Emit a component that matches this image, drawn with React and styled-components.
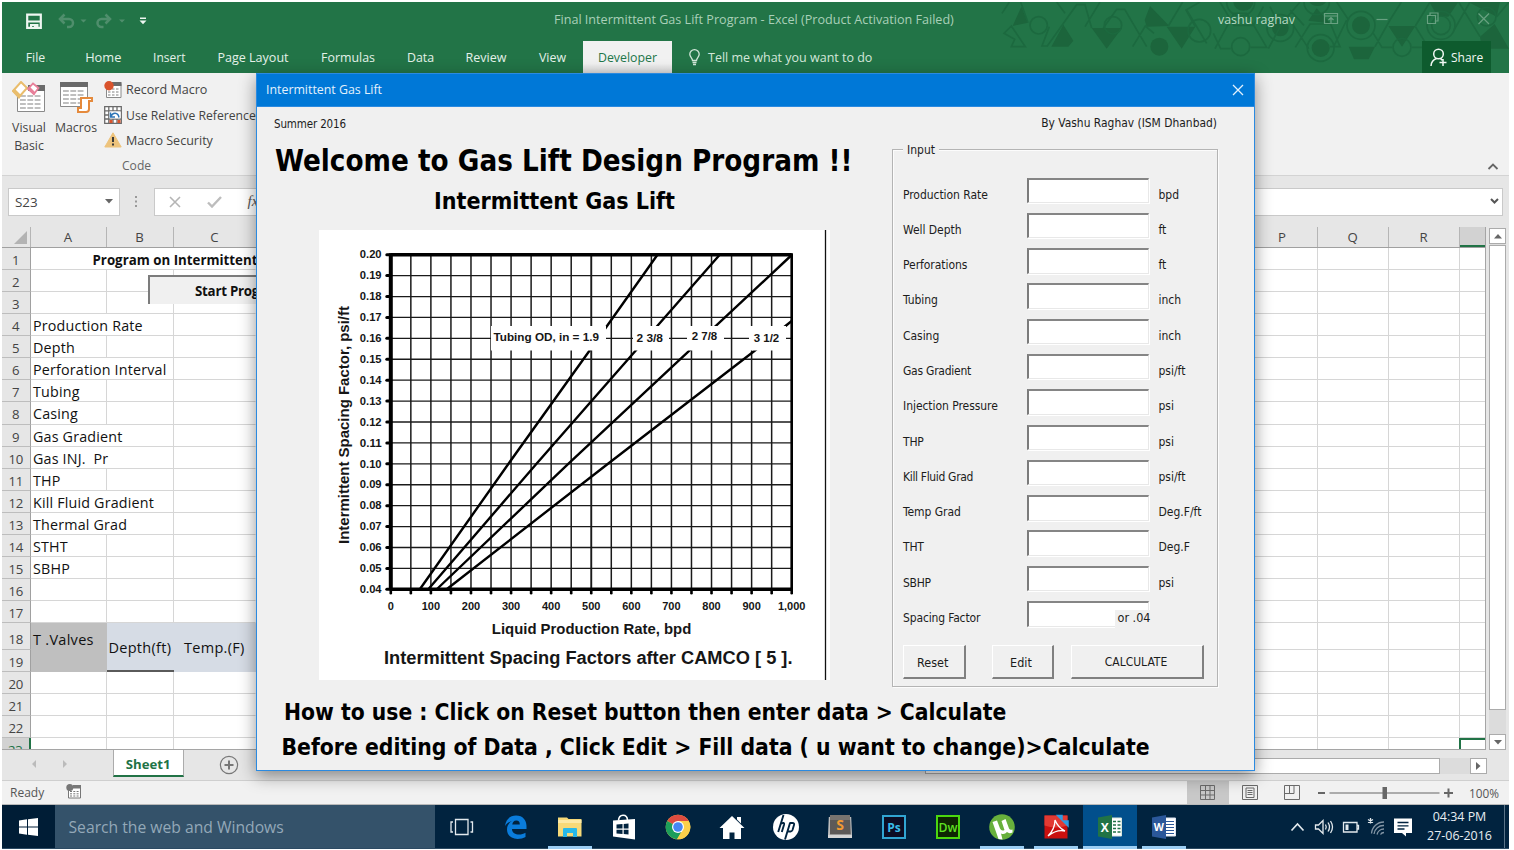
import React from 'react';
import styled, { createGlobalStyle, css } from 'styled-components';

const UI = '"Open Sans", "Noto Sans", sans-serif';
const FORM = '"DejaVu Sans Condensed", "DejaVu Sans", sans-serif';
const CHART = '"Liberation Sans", Arial, sans-serif';

const GlobalStyle = createGlobalStyle`
  * { box-sizing: border-box; }
  html, body { margin: 0; padding: 0; background: #fff; overflow: hidden; }
  svg { display: block; flex: none; }
`;

const Screen = styled.div`
  position: relative;
  width: 1507px;
  height: 847px;
  margin: 2px 0 0 2px;
  display: flex;
  flex-direction: column;
  font-family: ${UI};
  font-size: 12.5px;
  color: #444;
  white-space: nowrap;
  background: #e6e6e6;
`;

/* ---------- title bar and ribbon tabs ---------- */

const Banner = styled.header`
  position: relative;
  height: 71px;
  flex: none;
  background: #227447;
  display: flex;
  flex-direction: column;
`;

const BannerArt = styled.svg`
  position: absolute;
  right: 0;
  top: 0;
`;

const TitleBar = styled.div`
  position: relative;
  height: 39px;
  display: flex;
  align-items: center;
  padding-bottom: 4px;
  color: #a9d0b8;
`;

const QuickAccess = styled.div`
  width: 552px;
  padding: 2px 0 0 24px;
  display: flex;
  align-items: center;
`;

const WindowTitle = styled.div`
  width: 664px;
  font-size: 12.6px;
`;

const UserName = styled.div`
  width: 105px;
  font-size: 12.43px;
  color: #b9dac5;
`;

const TabBar = styled.nav`
  position: relative;
  height: 32px;
  display: flex;
`;

const RibbonTab = styled.div`
  width: ${(p) => p.$w}px;
  display: flex;
  align-items: center;
  justify-content: center;
  font-size: ${(p) => p.$size || 12.5}px;
  color: ${(p) => (p.$active ? '#22764a' : '#e4f1e9')};
  background: ${(p) => (p.$active ? 'linear-gradient(#f1f1f1 70%, #dadada)' : 'transparent')};
`;

const TellMe = styled.div`
  display: flex;
  align-items: center;
  gap: 8px;
  margin-left: 17px;
  color: #d3e7da;
`;

const Share = styled.div`
  margin: 0 18px 0 auto;
  width: 69px;
  display: flex;
  align-items: center;
  gap: 3px;
  padding-left: 8px;
  background: #0e5b2e;
  color: #f2f8f4;
  font-size: 12px;
`;

/* ---------- ribbon ---------- */

const Ribbon = styled.section`
  height: 103px;
  flex: none;
  background: #f1f1f1;
  border-bottom: 1px solid #d3d3d3;
  display: flex;
  padding: 8px 0 0 9px;
`;

const BigButton = styled.div`
  width: ${(p) => p.$w}px;
  display: flex;
  flex-direction: column;
  align-items: center;
  text-align: center;
  gap: 6px;
  font-size: 12.3px;
  line-height: 17.7px;
`;

const SmallButtons = styled.div`
  display: flex;
  flex-direction: column;
  margin: -4px 0 0 -1px;
`;

const SmallButton = styled.div`
  height: 25.4px;
  flex: none;
  display: flex;
  align-items: center;
  gap: 4px;
  font-size: ${(p) => p.$size || 12.55}px;
`;

const GroupName = styled.div`
  flex: none;
  padding-left: 18px;
  line-height: 26px;
  font-size: 12.1px;
  color: #666;
`;

const Collapse = styled.div`
  margin: 80px 10px 0 auto;
`;

/* ---------- formula bar ---------- */

const FormulaRow = styled.section`
  height: 51px;
  flex: none;
  padding: 11.5px 6px 0 6px;
  display: flex;
`;

const NameBox = styled.div`
  width: 111.5px;
  height: 28.5px;
  border: 1px solid #c9c9c9;
  background: #fff;
  display: flex;
  align-items: center;
  justify-content: space-between;
  padding: 0 6px 0 6px;
  font-size: 13.4px;
`;

const Dots = styled.div`
  width: 34px;
  display: flex;
  justify-content: center;
  align-items: center;
  height: 28.5px;
`;

const FormulaBox = styled.div`
  flex: 1;
  height: 28.5px;
  border: 1px solid #c9c9c9;
  background: #fff;
  display: flex;
  align-items: center;
  gap: 26px;
  padding: 0 3px 0 14px;
`;

const Fx = styled.i`
  font: italic 15px "Liberation Serif", serif;
  color: #555;
  flex: 1;
`;

/* ---------- worksheet ---------- */

const SheetArea = styled.section`
  height: 523px;
  flex: none;
  display: flex;
`;

const Sheet = styled.div`
  position: relative;
  width: 1484px;
  height: 523px;
  overflow: hidden;
  background: #fff;
  border-right: 1px solid #a5a5a5;
  border-bottom: 1px solid #a5a5a5;
`;

const HeadRow = styled.div`
  display: flex;
  height: 21px;
  background: #e6e6e6;
  border-bottom: 1px solid #a0a0a0;
`;

const ColHead = styled.div`
  width: ${(p) => p.$w}px;
  flex: none;
  border-right: 1px solid #b5b5b5;
  font-size: 13.2px;
  line-height: 20px;
  text-align: center;
  color: #444;
  ${(p) => p.$selected && css`
    background: #d2d2d2;
    border-bottom: 2px solid #217346;
  `}
`;

const Corner = styled(ColHead)`
  display: flex;
  align-items: flex-end;
  justify-content: flex-end;
  padding: 0 3px 3px 0;
`;

const Row = styled.div`
  display: flex;
  height: ${(p) => p.$h || 22.07}px;
`;

const RowHead = styled.div`
  width: 28.5px;
  height: ${(p) => p.$h || 22.07}px;
  flex: none;
  background: ${(p) => (p.$selected ? '#d2d2d2' : '#e6e6e6')};
  color: ${(p) => (p.$selected ? '#217346' : '#444')};
  border-right: ${(p) => (p.$selected ? '2px solid #217346' : '1px solid #a0a0a0')};
  border-bottom: 1px solid #bdbdbd;
  font-size: 13.2px;
  letter-spacing: -0.2px;
  line-height: ${(p) => (p.$h ? p.$h + 6 : 24)}px;
  text-align: center;
`;

const Cell = styled.div`
  width: ${(p) => p.$w}px;
  flex: none;
  border-right: 1px solid ${(p) => (p.$open ? 'transparent' : '#d6d6d6')};
  border-bottom: 1px solid #d6d6d6;
  padding-left: 2.5px;
  font-size: 14.3px;
  letter-spacing: 0.18px;
  line-height: 24.6px;
  color: #111;
`;

const TitleCell = styled(Cell)`
  padding-left: 62px;
  font-weight: 700;
  font-size: 13.3px;
  letter-spacing: 0;
  line-height: 24px;
`;

const MergedRows = styled.div`
  display: flex;
  height: 49px;
`;

const HeadStack = styled.div`
  display: flex;
  flex-direction: column;
  flex: none;
`;

const HeadCell = styled.div`
  width: ${(p) => p.$w}px;
  height: 49px;
  flex: none;
  background: ${(p) => p.$bg};
  border-bottom: ${(p) => (p.$line ? '2px solid #5a5a5a' : `1px solid ${p.$bg}`)};
  padding-left: ${(p) => p.$pad}px;
  color: #111;
  font-size: 14.5px;
  letter-spacing: 0.28px;
  line-height: ${(p) => p.$lh}px;
`;

const CellStack = styled.div`
  display: flex;
  flex-direction: column;
  flex: none;
`;

const StartButton = styled.div`
  position: absolute;
  left: 146px;
  top: 48px;
  width: 200px;
  height: 29px;
  background: #f0f0f0;
  border-top: 2px solid #7c7c7c;
  border-left: 2px solid #7c7c7c;
  padding-left: 45px;
  font-weight: 700;
  font-size: 13.3px;
  letter-spacing: -0.25px;
  line-height: 28px;
  color: #111;
`;

const ActiveCell = styled.div`
  width: 28px;
  height: 14px;
  margin-left: -1px;
  border-top: 2px solid #217346;
  border-left: 2px solid #217346;
`;

const VScroll = styled.div`
  margin: 1px 0 0 3px;
  width: 17px;
  display: flex;
  flex-direction: column;
  background: #dcdcdc;
`;

const ScrollButton = styled.div`
  width: 17px;
  height: 16px;
  background: #fff;
  border: 1px solid #ababab;
  display: flex;
  align-items: center;
  justify-content: center;
`;

const VThumb = styled.div`
  height: 465px;
  margin: 1px 0 auto;
  background: #fff;
  border: 1px solid #ababab;
`;

const SheetTabs = styled.section`
  height: 31px;
  flex: none;
  display: flex;
  border-bottom: 1px solid #cfcfcf;
`;

const TabArrows = styled.div`
  width: 110.5px;
  height: 28px;
  padding-left: 29px;
  display: flex;
  align-items: center;
  gap: 25px;
`;

const SheetTab = styled.div`
  width: 71.5px;
  height: 27px;
  background: #fff;
  border: solid #ababab;
  border-width: 0 1px 0 1px;
  border-bottom: 2px solid #217346;
  text-align: center;
  font-weight: 700;
  font-size: 13.2px;
  line-height: 28px;
  color: #217346;
`;

const AddSheet = styled.div`
  margin: 5px 0 0 35px;
`;

const HScroll = styled.div`
  margin: 7.5px 22.5px 0 auto;
  width: 562px;
  height: 16px;
  display: flex;
  justify-content: space-between;
  background: #dcdcdc;
`;

const HThumb = styled.div`
  width: 515px;
  background: #fff;
  border: 1px solid #ababab;
`;

/* ---------- status bar ---------- */

const StatusBar = styled.footer`
  height: 24px;
  flex: none;
  background: #f1f1f1;
  border-bottom: 1px solid #b9b9b9;
  display: flex;
  align-items: center;
  padding: 0 10px 0 8px;
  font-size: 12px;
  color: #555;
`;

const RecordIcon = styled.div`
  margin: -2px 0 0 22px;
`;

const ViewButton = styled.div`
  width: 42px;
  height: 23px;
  display: flex;
  align-items: center;
  justify-content: center;
  background: ${(p) => (p.$on ? '#c8c8c8' : 'transparent')};
`;

const Views = styled.div`
  margin-left: auto;
  display: flex;
`;

const Zoom = styled.div`
  width: 184px;
  margin-left: 2.5px;
  display: flex;
  align-items: center;
  justify-content: space-between;
  font-size: 11.8px;
`;

/* ---------- taskbar ---------- */

const Taskbar = styled.footer`
  height: 44px;
  flex: none;
  display: flex;
  background: #01233f;
  border-bottom: 1px solid #2c4a63;
`;

const StartMenu = styled.div`
  width: 53px;
  flex: none;
  display: flex;
  align-items: center;
  justify-content: center;
  background: #001d36;
`;

const SearchBox = styled.div`
  width: 380px;
  flex: none;
  padding-left: 13.5px;
  background: #34526a;
  color: #93a8b8;
  font-size: 15.7px;
  line-height: 45px;
`;

const TaskIcon = styled.div`
  width: 54px;
  flex: none;
  display: flex;
  align-items: center;
  justify-content: center;
  background: ${(p) => (p.$active ? '#014f8c' : 'transparent')};
  position: relative;
  ${(p) => (p.$open || p.$active) && css`
    &::after {
      content: '';
      position: absolute;
      left: ${p.$active ? 0 : 5}px;
      right: ${p.$active ? 0 : 5}px;
      bottom: -1px;
      height: 3px;
      background: #9bcdf3;
    }
  `}
`;

const Tray = styled.div`
  margin-left: auto;
  display: flex;
  align-items: center;
`;

const Clock = styled.div`
  width: 83px;
  margin: 0 4px 0 9px;
  border-right: 1px solid #5b7488;
  padding: 2px 7px 0 0;
  height: 43px;
  text-align: center;
  font-size: 12.45px;
  line-height: 19px;
  color: #e8eef2;
`;

/* ---------- dialog ---------- */

const Dialog = styled.div`
  position: absolute;
  left: 254px;
  top: 71px;
  width: 999px;
  height: 698px;
  background: #f0f0f0;
  border: 1px solid #2b8ae0;
  box-shadow: 0 5px 16px rgba(0, 0, 0, 0.42);
  font-family: ${FORM};
  font-size: 12px;
  color: #1c1c1c;
`;

const DialogTitle = styled.div`
  height: 33px;
  background: #0078d7;
  border-bottom: 1px solid #2b8ae0;
  display: flex;
  justify-content: space-between;
  align-items: center;
  padding: 0 10px 1px 9px;
  font-family: ${UI};
  font-size: 12.36px;
  color: #e3f1fc;
`;

const DialogBody = styled.div`
  display: flex;
`;

const Intro = styled.div`
  width: 635px;
  padding: 8.5px 0 0 17px;
`;

const Term = styled.div`
  font-size: 11.5px;
  letter-spacing: -0.15px;
  line-height: 16px;
`;

const Heading = styled.h1`
  margin: 8.5px 0 0 1px;
  font-size: 29.25px;
  line-height: 42px;
  font-weight: 700;
  color: #000;
`;

const SubHeading = styled.h2`
  margin: 0 0 0 160px;
  font-size: 23.05px;
  line-height: 38px;
  font-weight: 700;
  color: #000;
`;

const Figure = styled.div`
  margin: 10px 0 0 45px;
  width: 511px;
  height: 450px;
  background: #fff;
`;

const Help = styled.p`
  margin: ${(p) => p.$top}px 0 0 ${(p) => p.$left}px;
  font-size: ${(p) => p.$size}px;
  line-height: 35px;
  font-weight: 700;
  color: #000;
`;

const FormSide = styled.div`
  width: 326px;
  padding-top: 8px;
`;

const Author = styled.div`
  text-align: right;
  padding-right: 1px;
  font-size: 11.92px;
  line-height: 17px;
`;

const InputGroup = styled.div`
  position: relative;
  margin-top: 17px;
  height: 538px;
  border: 1px solid #b4b4b4;
  box-shadow: inset 1px 1px 0 #fcfcfc, 1px 1px 0 #fcfcfc;
  padding: 27.5px 0 0 10px;
`;

const Legend = styled.span`
  position: absolute;
  left: 10px;
  top: -8px;
  padding: 0 4px;
  line-height: 17px;
  background: #f0f0f0;
`;

const Field = styled.div`
  position: relative;
  display: flex;
  height: 35.31px;
  line-height: 34px;
`;

const FieldLabel = styled.label`
  width: 124px;
  letter-spacing: ${(p) => p.$ls || -0.05}px;
`;

const TextBox = styled.div`
  width: 122px;
  height: 25.5px;
  margin-right: 9.5px;
  background: #fff;
  border: 2px solid;
  border-color: #858585 #e8e8e8 #e8e8e8 #7b7b7b;
  border-right-width: 1px;
  border-bottom-width: 1px;
  box-shadow: 1px 1px 0 #fff;
`;

const Hint = styled.span`
  position: absolute;
  left: 212px;
  top: 9px;
  width: 39px;
  height: 18px;
  padding-left: 2.5px;
  background: #f0f0f0;
  line-height: 15px;
  font-size: 12.5px;
`;

const Buttons = styled.div`
  display: flex;
  margin-top: 9px;
`;

const Button = styled.div`
  width: ${(p) => p.$w}px;
  height: 34px;
  margin-right: ${(p) => p.$gap || 0}px;
  border: solid;
  border-width: 1px 2px 2px 1px;
  border-color: #fff #808080 #808080 #fff;
  text-align: center;
  line-height: 33px;
  padding-right: 2px;
  font-size: ${(p) => p.$size || 12.5}px;
`;

/* ---------- drawings ---------- */

const TitlePattern = () => (
  <BannerArt width="509" height="71" viewBox="0 6 1527 213">
    <g fill="#1c653c">
      <path d="M38 78 64 20 84 68z M190 74 220 122 205 140H154z M275 84H366L320 146z M450 18 508 78 440 80 434 60z M500 80H586L545 146z M925 62 950 25 990 70z M1046 140H1125L1106 178H1062z M1165 78H1246L1206 140z M1288 6H1375L1345 50 1312 48z M1405 6H1500L1490 50z M1440 110 1484 72 1527 146H1446z M700 6H760A30 26 0 0 1 700 6z M928 6H978A28 22 0 0 1 928 6z" />
      <circle cx="478" cy="140" r="27" />
      <circle cx="841" cy="84" r="25" />
      <circle cx="962" cy="144" r="27" />
      <circle cx="1083" cy="76" r="27" />
    </g>
    <g fill="none" stroke="#1c693f" strokeWidth="5">
      <path d="M6 40 28 6 M84 68 62 6 M12 100 34 78 76 140H34L44 118z M148 80 126 138H142L230 14H255L275 84 M195 40 170 6 M255 80 300 6 M310 84 350 28 H374L440 140 M398 140 436 78 462 100 M505 78 548 6 M586 80 558 30 600 6 M560 30 620 130 M645 146 702 40 740 40 800 142 H752 M640 100 662 146H692 M660 6 702 76 760 76 790 20 M805 146 846 70 900 6 M810 20 830 60 M880 76 926 146 M886 142 930 72 H992L1020 140H990 M870 30 912 76 M1000 142 1040 60 M1010 6 1046 60 M1125 140 1170 60 1204 6 M1120 100 1146 142H1176 M1246 78 1290 6 M1236 142H1270 M1246 80 1285 142 M1362 90 1410 6 M1376 6 1440 110 M1490 50 1527 6" />
      <circle cx="116" cy="76" r="26" />
      <circle cx="339" cy="76" r="26" />
      <circle cx="598" cy="92" r="34" />
      <circle cx="722" cy="140" r="27" />
      <circle cx="722" cy="6" r="42" />
      <circle cx="841" cy="84" r="40" />
      <circle cx="950" cy="6" r="38" />
      <circle cx="962" cy="144" r="40" />
      <circle cx="1083" cy="76" r="42" />
      <circle cx="1206" cy="142" r="27" />
      <circle cx="1323" cy="76" r="28" />
      <circle cx="1323" cy="76" r="42" />
      <circle cx="1460" cy="50" r="28" />
    </g>
  </BannerArt>
);

const QuickIcons = () => (
  <svg width="124" height="20" viewBox="26 10 124 20" fill="none">
    <path d="M27.200 13.600h13.600v13.200H27.200z" stroke="#eef6f1" strokeWidth="2.200" />
    <path d="M28 19.500h12v2H28z M30 23h8.500v4.500h-4.500v-2.500h-2v2.500h-2z" fill="#eef6f1" />
    <g stroke="#4f8e6c" strokeWidth="2.500">
      <path d="M64.500 13.500 60 18 64.500 22.500 M60.500 18H69a4 4 0 0 1 0 8h-2" />
      <path d="M105.500 13.500 110 18 105.500 22.500 M110 18H101.500a4 4 0 0 0 0 8h2" />
    </g>
    <path d="M80.500 18.500h6l-3 3z M119 18.500h6l-3 3z" fill="#4f8e6c" />
    <path d="M140 16.500h6v1.500h-6z M139.500 19.500h7l-3.500 3.800z" fill="#eef6f1" />
  </svg>
);

const WindowIcons = () => (
  <svg width="168" height="20" viewBox="1323 10 168 20" fill="none" stroke="#68a181" strokeWidth="1.200">
    <path d="M1324.500 13.500h13v10h-13z M1324.500 16h13 M1331 23v-5 M1328.500 20l2.500-2.500 2.500 2.500" />
    <path d="M1376.500 19.500h11" />
    <path d="M1427.500 15.500h8v8h-8z M1430 15.500v-2.500h8v8h-2.500" />
    <path d="M1478.500 13.500 1489 24 M1489 13.500 1478.500 24" />
  </svg>
);

const Bulb = () => (
  <svg width="11" height="17" viewBox="0 0 11 17" fill="none" stroke="#d3e7da" strokeWidth="1.300">
    <path d="M3.500 11.500C3.500 9 .8 8 .8 5.200a4.700 4.500 0 0 1 9.400 0C10.200 8 7.500 9 7.500 11.500z M3.500 13.500h4 M4 15.500h3" />
  </svg>
);

const Person = () => (
  <svg width="18" height="19" viewBox="0 0 18 19" fill="none" stroke="#f2f8f4" strokeWidth="1.500">
    <circle cx="8.500" cy="6" r="4.800" />
    <path d="M1 18c.3-4 2.200-6.500 5.500-7.500 M10.500 10.300l1.500 2 M9.500 14.500h7 M13 11v7" />
  </svg>
);

const TableLines = ({ x, y, w, rows, cols, s = 4, c = '#aaa' }) => (
  <g stroke={c} strokeWidth="1.300" strokeDasharray={`${w / cols - 1.5} 1.5`}>
    {Array.from({ length: rows }, (_, i) => (
      <path key={i} d={`M${x} ${y + i * s}h${w}`} />
    ))}
  </g>
);

const VisualBasicIcon = () => (
  <svg width="35" height="32" viewBox="0 0 35 32" fill="none">
    <path d="M5.500 6.500h27v24h-27z" fill="#fff" stroke="#8a8a8a" />
    <path d="M16 4h17v6H16z" fill="#6b6b6b" />
    <TableLines x={8} y={15} w={22} rows={4} cols={3} />
    <path d="M9 1 15 7 7 16 1 10z" fill="#fff" stroke="#e9bd6c" strokeWidth="2" />
    <path d="M0 10 7 18l2.500-3.500-7-7z" fill="#e9bd6c" />
    <path d="M21 2.500 26.500 7 22 13 16 8z" fill="#fff" stroke="#e8809a" strokeWidth="1.800" />
    <path d="M15.500 8l6.500 6.500 1.500-3-5.500-5.500z" fill="#e8809a" />
  </svg>
);

const MacrosIcon = () => (
  <svg width="35" height="32" viewBox="0 0 35 32" fill="none">
    <path d="M1.500 1.500h27v24h-27z" fill="#fff" stroke="#8a8a8a" />
    <path d="M1 1h28v5H1z" fill="#6b6b6b" />
    <TableLines x={4} y={10} w={22} rows={4} cols={3} />
    <path d="M22 17h11v3h-3v8c0 2-1 3-3 3h-8v-4h3z" fill="#fff" stroke="#e58a3c" strokeWidth="2" />
  </svg>
);

const RecordMacroIcon = () => (
  <svg width="18" height="17" viewBox="0 0 18 17">
    <path d="M2.500 2.500h14.500v14h-14.500z" fill="#fff" stroke="#8a8a8a" />
    <path d="M8 1h9.500v4H8z" fill="#6b6b6b" />
    <TableLines x={4} y={8} w={12} rows={3} cols={3} s={3} />
    <circle cx="5" cy="4.700" r="4.700" fill="#d9532c" />
  </svg>
);

const RelativeIcon = () => (
  <svg width="18" height="18" viewBox="0 0 18 18" fill="none">
    <path d="M.7.7h16.600v16.600H.7z M.7 4.800h16.600 M.7 13h16.600 M4.800.7v16.600 M9 .7v4 M13 .7v4 M9 13v4.500 M13 13v4.500 M.7 9h4" fill="#fff" stroke="#6b6b6b" strokeWidth="1.300" />
    <path d="M5.500 5.500h11v7h-11z" fill="#fff" />
    <path d="M7 10.500c1.500-4.500 7-4.500 8 1 M6.500 6.500v4.500h4.500" stroke="#2e75b6" strokeWidth="1.500" />
    <path d="M5.500 14h3v3h-3z M13.500 14h3v3h-3z" fill="#d9532c" />
  </svg>
);

const WarningIcon = () => (
  <svg width="18" height="16" viewBox="0 0 18 16">
    <path d="M9 .8 17.200 15H.8z" fill="#edc37c" stroke="#edc37c" strokeLinejoin="round" />
    <path d="M8 5h2v5H8z M8 11.500h2v2H8z" fill="#3a3a3a" />
  </svg>
);

const WindowsLogo = () => (
  <svg width="19" height="18" viewBox="0 0 19 18" fill="#fff">
    <path d="M0 2.500 8 1.300V8.500H0z M9 1.200 19 0v8.500H9z M0 9.500h8v7.200L0 15.500z M9 9.500h10V18L9 16.800z" />
  </svg>
);

const icon = (body, w = 26) => (
  <svg width={w} height="26" viewBox="0 0 26 26" fill="none">{body}</svg>
);

const TASKS = [
  { id: 'view', art: icon(<path d="M6.500 5.500h12.500v15H6.500z M4 8H2v10h2 M21.500 8h2v10h-2" stroke="#e3e9ed" strokeWidth="1.300" />) },
  { id: 'edge', art: icon(<path d="M2 12C3 4.500 8 1.500 13 1.500c7 0 10.500 5 10.500 10.500v3H9c0 4 3.500 5.500 7 5.500 2.500 0 4.500-.6 6.500-1.800V23c-2 1.300-5 1.900-8 1.900-6 0-10.500-3.800-10.500-9.500 0-4 2.200-7 5.500-8.600C6 7.800 3.500 9.500 2 12z M9.300 10.500h7.500c0-2.500-1-4-3.500-4s-3.800 2-4 4z" fill="#0a7cdb" fillRule="evenodd" />) },
  { id: 'files', open: true, art: icon(<g><path d="M1 3.500h9l1.500 1.500H24.500V22.500H1z" fill="#f6d978" /><path d="M1 6h23.500v3H1z" fill="#fbe9a6" /><path d="M6 23v-8q0-1 1-1h12q1 0 1 1v8h-4v-4h-6v4z" fill="#27b9ea" /></g>) },
  { id: 'store', art: icon(<g><path d="M2 6.500 24 5v20.500L2 22.500z" fill="#fff" /><path d="M7.500 6.500C8-.5 16-.5 16.500 6" stroke="#fff" strokeWidth="1.600" /><path d="M5.500 10.500l6-.4v4.400h-6z M12.700 10l4.800-.5v5h-4.800z M5.500 15.700h6v4.200l-6-.5z M12.700 15.700h4.800v4.700l-4.800-.4z" fill="#01233f" /></g>) },
  { id: 'chrome', art: icon(<g><circle cx="13" cy="13" r="12.300" fill="#fbd04b" /><path d="M13 13 2.300 6.900A12.300 12.300 0 0 1 23.700 6.900H13z" fill="#dd4c40" /><path d="M13 13 2.300 6.900A12.300 12.300 0 0 0 12 25.300L18 15z" fill="#1c9e5a" /><path d="M13 6.900H23.700A12.300 12.300 0 0 1 12 25.300L18.500 15z" fill="#fbd04b" /><circle cx="13" cy="13" r="6" fill="#fff" /><circle cx="13" cy="13" r="4.800" fill="#4587f3" /></g>) },
  { id: 'home', art: icon(<path d="M13 2 25.500 14h-3.500V25H15.500v-6.500h-5V25H4V14H.5z M18 3h4v6.500L18 5.500z" fill="#fff" />) },
  { id: 'hp', art: icon(<g><circle cx="13" cy="13" r="13" fill="#fff" /><path d="M10.500 1 5.200 18 M7.800 9.500q4-1.500 3.300 1L8.800 18 M12 25.500 17 9 M16.500 9h3q2.200 0 1.500 2l-1.500 5q-.6 1.500-2 1.500h-3" stroke="#01233f" strokeWidth="1.900" /></g>) },
  { id: 'sublime', art: icon(<g><path d="M3 1h20l1.500 20H1.500z" fill="#5d5a58" /><path d="M3 1h20v5H3z" fill="#77736f" /><path d="M1 20.500h24v3.500H1z" fill="#d6d6d6" /><path d="M1.800 3h1.200v18H1z M23 3h1.200l.8 18h-1.200z" fill="#bdbdbd" /><text x="13" y="15.500" textAnchor="middle" fontFamily="Open Sans" fontSize="14" fontWeight="700" fill="#f39a32">S</text></g>) },
  { id: 'ps', art: icon(<g><path d="M2 2h22v22h-22z" fill="#0c0d24" stroke="#31a5d2" strokeWidth="2" /><text x="13" y="17.500" textAnchor="middle" fontFamily="Open Sans" fontSize="12" fontWeight="700" fill="#39bce8">Ps</text></g>) },
  { id: 'dw', art: icon(<g><path d="M2 2h22v22h-22z" fill="#0e2603" stroke="#4bd80f" strokeWidth="2" /><text x="13" y="17.500" textAnchor="middle" fontFamily="Open Sans" fontSize="12.500" fontWeight="600" fill="#5ee222" textLength="19" lengthAdjust="spacingAndGlyphs">Dw</text></g>) },
  { id: 'torrent', open: true, art: icon(<g><circle cx="13" cy="13" r="12.800" fill="#68b03c" /><path d="M3.500 8 8 6.500l3 8q1.500 3 4.500 1.500-.5-1.500-3-9L16.500 5l3.500 9.500q1 2 3.500 1v3q-3.500 1.500-5.500-.5-2.500 3-6 1.500L13.500 25.500l-4-.5z" fill="#fff" /></g>) },
  { id: 'acrobat', open: true, art: icon(<g><path d="M1.500 1.500h23v23h-23z" fill="#c9100f" /><path d="M1.500 1.500h23v10q-12 4-23 0z" fill="#e23a33" /><path d="M12 6c2 5 4 8 10 11-7-1.500-12 1-17 5 4-4 7-9 7-16z" stroke="#fff" strokeWidth="1.300" /><path d="M14.500 1.500h4.500v4.500z M20 7h5v5z" fill="#2f9be0" stroke="#2f9be0" strokeWidth="1.500" /></g>) },
  { id: 'excel', active: true, art: icon(<g><path d="M13 4h11.500v18H13z" fill="#fff" stroke="#d9e6dd" /><path d="M16 7.500h3 M16 11h3 M16 14.500h3 M16 18h3 M20.500 7.500h3 M20.500 11h3 M20.500 14.500h3 M20.500 18h3" stroke="#217346" strokeWidth="1.600" /><path d="M1 3.500 15 1v24L1 22.500z" fill="#217346" /><text x="7.800" y="17.500" textAnchor="middle" fontFamily="Open Sans" fontSize="12" fontWeight="700" fill="#fff">X</text></g>) },
  { id: 'word', open: true, art: icon(<g><path d="M13 4h11.500v18H13z" fill="#fff" stroke="#dde3f0" /><path d="M15 7.500h8 M15 10.500h8 M15 13.500h8 M15 16.500h8 M15 19.500h8" stroke="#2b579a" strokeWidth="1.200" /><path d="M1 3.500 15 1v24L1 22.500z" fill="#2b579a" /><text x="7.800" y="17" textAnchor="middle" fontFamily="Open Sans" fontSize="10.500" fontWeight="700" fill="#fff">W</text></g>) },
];

const TrayIcons = () => (
  <svg width="124" height="24" viewBox="1289 815 124 24" fill="none" stroke="#e3e9ed" strokeWidth="1.300">
    <path d="M1291.500 830.500l6-6.500 6 6.500" strokeWidth="1.700" />
    <path d="M1315.500 825h3l4.500-4.500v13l-4.500-4.500h-3z M1325.500 824.500q1.500 2.500 0 5 M1328 822.500q3 4.500 0 9 M1330.500 821q4 6 0 12" />
    <path d="M1343.500 822.500h13.500v9.500h-13.500z M1357 825.500h1.500v3.500h-1.500" />
    <path d="M1345.500 824.500h3v5.500h-3z" fill="#e3e9ed" stroke="none" />
    <path d="M1371.500 833.500a12.500 12.500 0 0 1 12.500-11.500 M1374 834a9.500 9.500 0 0 1 10-8.500 M1377 834.500a7 7 0 0 1 7-5.500 M1380.500 834.500a4 4 0 0 1 3.500-2" stroke="#8395a5" />
    <path d="M1370.500 818v5.500 M1368 819.500l5 3 M1373 819.500l-5 3" />
    <path d="M1394 818.500h18v14.500h-6v3.500l-4-3.500h-8z" fill="#fff" stroke="none" />
    <path d="M1397.500 822.500h11 M1397.500 825.800h11 M1397.500 829h7" stroke="#01233f" />
  </svg>
);

/* ---------- spacing factor chart ---------- */

const X0 = 390.8;
const X1 = 791.7;
const Y0 = 589.3;
const Y1 = 254.7;
const xAt = (v) => X0 + ((X1 - X0) * v) / 1000;
const yAt = (v) => Y0 - ((Y0 - Y1) * (v - 4)) / 16;
const CURVES = [
  [[420, 589], [508.5, 463.7], [590, 350], [657.3, 255]],
  [[428.5, 589], [536.5, 463.7], [719.5, 255]],
  [[437, 589], [568.5, 463.7], [791.7, 255]],
  [[447, 589], [608, 463.7], [755, 350.5], [791.7, 321]],
];
const CURVE_LABELS = [
  ['Tubing OD, in = 1.9', 493.5, 105.5, 341, 491, 115],
  ['2 3/8', 636.5, 26.5, 341.5, 633, 36],
  ['2 7/8', 691.7, 25.5, 340, 687, 37],
  ['3 1/2', 753.7, 25.5, 341.5, 749, 37],
];
const TICKS_Y = Array.from({ length: 17 }, (_, i) => 4 + i);
const TICKS_X = Array.from({ length: 21 }, (_, i) => i * 50);

const Chart = () => (
  <svg width="511" height="450" viewBox="319 230 511 450" fontFamily={CHART} fontWeight="700" fill="#161616">
    <g stroke="#1a1a1a" strokeWidth="1.300" fill="none">
      {TICKS_Y.map((v) => <path key={v} d={`M${X0} ${yAt(v)}H${X1}`} />)}
      {TICKS_X.map((v) => <path key={v} strokeWidth={v === 500 ? 1.9 : 1.5} d={`M${xAt(v)} ${Y1}V${Y0}`} />)}
    </g>
    <g stroke="#000" strokeWidth="2.400" fill="none">
      {CURVES.map((c, i) => <polyline key={i} points={c.map((p) => p.join()).join(' ')} />)}
    </g>
    {CURVE_LABELS.map(([t, x, w, y, bx, bw]) => (
      <g key={t}>
        <rect x={bx} y="326" width={bw} height="24.500" fill="#fff" />
        <text x={x} y={y} fontSize="11.500" textLength={w} lengthAdjust="spacingAndGlyphs">{t}</text>
      </g>
    ))}
    <g stroke="#000" fill="none">
      <path d={`M${X0} ${Y1}H${X1}`} strokeWidth="3.400" />
      <path d={`M${X1} ${Y1 - 1.5}V${Y0}`} strokeWidth="2.600" />
      <path d={`M${X0} ${Y1 - 1.5}V${Y0 + 1}`} strokeWidth="4" />
      <path d={`M${X0} ${Y0}H${X1 + 1}`} strokeWidth="3.600" />
      {TICKS_Y.map((v) => <path key={v} strokeWidth="3" strokeLinecap="round" d={`M${X0 - 4} ${yAt(v)}h4`} />)}
      {TICKS_X.map((v) => <path key={v} strokeWidth="2.600" strokeLinecap="round" d={`M${xAt(v)} ${Y0}v4`} />)}
    </g>
    {TICKS_Y.map((v) => (
      <text key={v} x="359.800" y={yAt(v) + 3.7} fontSize="11" textLength="21.800" lengthAdjust="spacingAndGlyphs">
        {(v / 100).toFixed(2)}
      </text>
    ))}
    {TICKS_X.filter((v) => v % 100 === 0).map((v) => (
      <text key={v} x={xAt(v)} y="609.500" fontSize="11" textAnchor="middle">{v.toLocaleString('en-US')}</text>
    ))}
    <text x="491.800" y="633.500" fontSize="14.800" textLength="199.500" lengthAdjust="spacingAndGlyphs">Liquid Production Rate, bpd</text>
    <text x="384" y="663.500" fontSize="18" textLength="408.500" lengthAdjust="spacingAndGlyphs">Intermittent Spacing Factors after CAMCO [ 5 ].</text>
    <text transform="translate(349 544) rotate(-90)" fontSize="14.500" textLength="238" lengthAdjust="spacingAndGlyphs">Intermittent Spacing Factor, psi/ft</text>
    <path d="M825.500 230v450" stroke="#111" strokeWidth="1.300" />
  </svg>
);

/* ---------- data ---------- */

const ROWS = [
  ['2', ''], ['3', ''], ['4', 'Production Rate', true], ['5', 'Depth'],
  ['6', 'Perforation Interval', true], ['7', 'Tubing'], ['8', 'Casing'],
  ['9', 'Gas Gradient', true], ['10', 'Gas INJ.\u00a0 Pr', true], ['11', 'THP'],
  ['12', 'Kill Fluid Gradient', true], ['13', 'Thermal Grad', true],
  ['14', 'STHT'], ['15', 'SBHP'], ['16', ''], ['17', ''],
];

const FIELDS = [
  ['Production Rate', 'bpd'], ['Well Depth', 'ft'], ['Perforations', 'ft'],
  ['Tubing', 'inch'], ['Casing', 'inch'], ['Gas Gradient', 'psi/ft', -0.25],
  ['Injection Pressure', 'psi'], ['THP', 'psi', -0.2], ['Kill Fluid Grad', 'psi/ft', -0.34],
  ['Temp Grad', 'Deg.F/ft'], ['THT', 'Deg.F', -0.2], ['SBHP', 'psi', -0.3],
  ['Spacing Factor', '', -0.15],
];

const TABS = [
  ['File', 67, 12.3], ['Home', 68.5, 12.8], ['Insert', 63.5, 12],
  ['Page Layout', 104, 12.55], ['Formulas', 86, 12.4], ['Data', 59, 12.4],
  ['Review', 72, 12.5], ['View', 61, 12.4],
];

const RightCells = ({ h }) => (
  <>
    <Cell $w={991.5} />
    <Cell $w={71} />
    <Cell $w={70.5} />
    <Cell $w={71} />
    {h ? null : <Cell $w={27} $open />}
  </>
);

const SheetRow = ({ n, text, spill }) => (
  <Row>
    <RowHead>{n}</RowHead>
    {spill ? <Cell $w={143}>{text}</Cell> : <><Cell $w={76}>{text}</Cell><Cell $w={67} /></>}
    <Cell $w={82} $open />
    <RightCells />
  </Row>
);

const Worksheet = () => (
  <Sheet>
    <HeadRow>
      <Corner $w={28.5}><svg width="13" height="13"><path d="M13 0v13H0z" fill="#b3b3b3" /></svg></Corner>
      <ColHead $w={76}>A</ColHead>
      <ColHead $w={67}>B</ColHead>
      <ColHead $w={83}>C</ColHead>
      <ColHead $w={990.5} />
      <ColHead $w={71}>P</ColHead>
      <ColHead $w={70.5}>Q</ColHead>
      <ColHead $w={71}>R</ColHead>
      <ColHead $w={29} $selected />
    </HeadRow>
    <Row>
      <RowHead>1</RowHead>
      <TitleCell $w={225} $open>Program on Intermittent Gas Lift</TitleCell>
      <RightCells />
    </Row>
    {ROWS.map(([n, text, spill]) => <SheetRow key={n} n={n} text={text} spill={spill} />)}
    <MergedRows>
      <HeadStack><RowHead $h={27}>18</RowHead><RowHead>19</RowHead></HeadStack>
      <HeadCell $w={76} $bg="#bfbfbf" $pad={2.5} $lh={34}>T .Valves</HeadCell>
      <HeadCell $w={67} $bg="#d6dce5" $pad={2} $lh={50} $line>Depth(ft)</HeadCell>
      <HeadCell $w={82} $bg="#d6dce5" $pad={10.5} $lh={50}>Temp.(F)</HeadCell>
      <CellStack>
        <Row $h={27}><RightCells /></Row>
        <Row><RightCells /></Row>
      </CellStack>
    </MergedRows>
    {['20', '21', '22'].map((n) => <SheetRow key={n} n={n} text="" />)}
    <Row>
      <RowHead $selected>23</RowHead>
      <Cell $w={76} /><Cell $w={67} /><Cell $w={82} $open />
      <RightCells h />
      <ActiveCell />
    </Row>
    <StartButton>Start Program</StartButton>
  </Sheet>
);

const InputForm = () => (
  <InputGroup>
    <Legend>Input</Legend>
    {FIELDS.map(([name, unit, ls]) => (
      <Field key={name}>
        <FieldLabel $ls={ls}>{name}</FieldLabel>
        <TextBox />
        {unit || <Hint>or .04</Hint>}
      </Field>
    ))}
    <Buttons>
      <Button $w={62.5} $gap={26}>Reset</Button>
      <Button $w={62} $gap={17.5}>Edit</Button>
      <Button $w={133} $size={12}>CALCULATE</Button>
    </Buttons>
  </InputGroup>
);

export default function App() {
  return (
    <>
      <GlobalStyle />
      <Screen>
        <Banner>
          <TitlePattern />
          <TitleBar>
            <QuickAccess><QuickIcons /></QuickAccess>
            <WindowTitle>Final Intermittent Gas Lift Program - Excel (Product Activation Failed)</WindowTitle>
            <UserName>vashu raghav</UserName>
            <WindowIcons />
          </TitleBar>
          <TabBar>
            {TABS.map(([t, w, s]) => <RibbonTab key={t} $w={w} $size={s}>{t}</RibbonTab>)}
            <RibbonTab $w={89} $size={12.35} $active>Developer</RibbonTab>
            <TellMe><Bulb />Tell me what you want to do</TellMe>
            <Share><Person />Share</Share>
          </TabBar>
        </Banner>

        <Ribbon>
          <BigButton $w={36}><VisualBasicIcon /><span>Visual<br />Basic</span></BigButton>
          <BigButton $w={58}><MacrosIcon />Macros</BigButton>
          <SmallButtons>
            <SmallButton><RecordMacroIcon />Record Macro</SmallButton>
            <SmallButton $size={12.2}><RelativeIcon />Use Relative References</SmallButton>
            <SmallButton><WarningIcon />Macro Security</SmallButton>
            <GroupName>Code</GroupName>
          </SmallButtons>
          <Collapse>
            <svg width="12" height="10" fill="none" stroke="#666" strokeWidth="1.800"><path d="M1.500 8 6 3.500 10.500 8" /></svg>
          </Collapse>
        </Ribbon>

        <FormulaRow>
          <NameBox>
            S23
            <svg width="8" height="5"><path d="M0 0h8L4 4.500z" fill="#666" /></svg>
          </NameBox>
          <Dots>
            <svg width="3" height="12" fill="#999"><path d="M0 0h2v2H0z M0 4.500h2v2H0z M0 9h2v2H0z" /></svg>
          </Dots>
          <FormulaBox>
            <svg width="12" height="12" fill="none" stroke="#b5b5b5" strokeWidth="1.600"><path d="M1 1l10 10 M11 1 1 11" /></svg>
            <svg width="15" height="12" fill="none" stroke="#bdbdbd" strokeWidth="2.400"><path d="M1 6.500 5 10.500 14 1" /></svg>
            <Fx>fx</Fx>
            <svg width="9" height="8" fill="none" stroke="#555" strokeWidth="2"><path d="M1 1 4.500 4.500 8 1" /></svg>
          </FormulaBox>
        </FormulaRow>

        <SheetArea>
          <Worksheet />
          <VScroll>
            <ScrollButton><svg width="8" height="5"><path d="M0 4.500h8L4 0z" fill="#666" /></svg></ScrollButton>
            <VThumb />
            <ScrollButton><svg width="8" height="5"><path d="M0 0h8L4 4.500z" fill="#666" /></svg></ScrollButton>
          </VScroll>
        </SheetArea>

        <SheetTabs>
          <TabArrows>
            <svg width="6" height="8"><path d="M5 0v8L1 4z" fill="#bbb" /></svg>
            <svg width="6" height="8"><path d="M1 0v8l4-4z" fill="#bbb" /></svg>
          </TabArrows>
          <SheetTab>Sheet1</SheetTab>
          <AddSheet>
            <svg width="20" height="20" fill="none" stroke="#777" strokeWidth="1.200">
              <circle cx="10" cy="10" r="8.600" />
              <path d="M5.500 10h9 M10 5.500v9" strokeWidth="2" />
            </svg>
          </AddSheet>
          <HScroll>
            <HThumb />
            <ScrollButton><svg width="5" height="8"><path d="M0 0v8l4.500-4z" fill="#666" /></svg></ScrollButton>
          </HScroll>
        </SheetTabs>

        <StatusBar>
          Ready
          <RecordIcon>
            <svg width="15" height="15">
              <path d="M2.500 3.500h12v10.500h-12z" fill="#fff" stroke="#777" />
              <path d="M7 1h8v3.500H7z" fill="#777" />
              <path d="M4 7.500h9 M4 9.800h9 M4 12h9" stroke="#777" strokeDasharray="2 1.300" />
              <circle cx="3.800" cy="3.500" r="3.500" fill="#777" />
            </svg>
          </RecordIcon>
          <Views>
            <ViewButton $on>
              <svg width="15" height="15" fill="none" stroke="#6a6a6a"><path d="M.5.5h14v14H.5z M.5 5.500h14 M.5 10h14 M5.500.5v14 M10 .5v14" /></svg>
            </ViewButton>
            <ViewButton>
              <svg width="16" height="15" fill="none" stroke="#6a6a6a"><path d="M.5.5h15v14H.5z M4 3h8v9.500H4z M5.500 5.500h5 M5.500 7.500h5 M5.500 9.500h5" /></svg>
            </ViewButton>
            <ViewButton>
              <svg width="16" height="15" fill="none" stroke="#6a6a6a"><path d="M.5.5h15v14H.5z M5.500.5v8 M10 .5v8 M.5 8.500h9.500" /></svg>
            </ViewButton>
          </Views>
          <Zoom>
            <svg width="140" height="14" fill="#666">
              <path d="M3 6h7v2H3z M14.500 6.500h110v1H14.500z M67.500 1h4.500v12h-4.500z M129 6h9v2h-9z M132.500 2.500h2v9h-2z" />
            </svg>
            100%
          </Zoom>
        </StatusBar>

        <Taskbar>
          <StartMenu><WindowsLogo /></StartMenu>
          <SearchBox>Search the web and Windows</SearchBox>
          {TASKS.map((t) => <TaskIcon key={t.id} $open={t.open} $active={t.active}>{t.art}</TaskIcon>)}
          <Tray>
            <TrayIcons />
            <Clock>04:34 PM<br />27-06-2016</Clock>
          </Tray>
        </Taskbar>

        <Dialog>
          <DialogTitle>
            Intermittent Gas Lift
            <svg width="12" height="12" fill="none" stroke="#e3f1fc" strokeWidth="1.300"><path d="M1 1l10 10 M11 1 1 11" /></svg>
          </DialogTitle>
          <DialogBody>
            <Intro>
              <Term>Summer 2016</Term>
              <Heading>Welcome to Gas Lift Design Program !!</Heading>
              <SubHeading>Intermittent Gas Lift</SubHeading>
              <Figure><Chart /></Figure>
              <Help $top={14.5} $left={10} $size={22.65}>How to use : Click on Reset button then enter data &gt; Calculate</Help>
              <Help $top={0} $left={7.5} $size={22.72}>Before editing of Data , Click Edit &gt; Fill data ( u want to change)&gt;Calculate</Help>
            </Intro>
            <FormSide>
              <Author>By Vashu Raghav (ISM Dhanbad)</Author>
              <InputForm />
            </FormSide>
          </DialogBody>
        </Dialog>
      </Screen>
    </>
  );
}
